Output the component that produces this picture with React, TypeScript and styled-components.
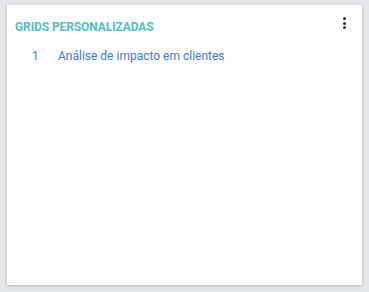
import React from "react";
import styled, { createGlobalStyle } from "styled-components";

const Global = createGlobalStyle`
  html, body { margin: 0; padding: 0; background: #e4e8ea; }
  body { font-family: Roboto, "Noto Sans", sans-serif; }
`;

const Page = styled.div`
  width: 369px;
  height: 292px;
  box-sizing: border-box;
  padding: 5px 7px 7px 7px;
  background: #e4e8ea;
`;

const Card = styled.div`
  position: relative;
  height: 100%;
  background: #fff;
  box-shadow: 0 1px 4px rgba(0, 0, 0, 0.22);
  padding: 14px 8px;
  box-sizing: border-box;
`;

const Title = styled.h2`
  margin: 0;
  font-size: 12px;
  font-weight: 700;
  color: #4fc1c6;
  line-height: 16px;
  letter-spacing: -0.1px;
`;

const List = styled.ol`
  list-style: none;
  margin: 13px 0 0;
  padding: 0;
`;

const Item = styled.li`
  display: flex;
  align-items: center;
  font-size: 12px;
  line-height: 16px;
`;

const Num = styled.span`
  width: 43px;
  box-sizing: border-box;
  padding-left: 17px;
  color: #5b7fa5;
`;

const Link = styled.a`
  color: #3b7cc0;
  text-decoration: none;
`;

const Menu = styled.button`
  position: absolute;
  top: 8px;
  right: 14px;
  border: 0;
  background: none;
  padding: 0;
  width: 8px;
  height: 20px;
  display: flex;
  flex-direction: column;
  align-items: center;
  justify-content: center;
  gap: 1.5px;
`;

const Dot = styled.span`
  width: 3px;
  height: 3px;
  border-radius: 50%;
  background: #2b2b2b;
`;

export default function App() {
  return (
    <>
      <Global />
      <Page>
        <Card>
          <Title>GRIDS PERSONALIZADAS</Title>
          <Menu aria-label="menu">
            <Dot />
            <Dot />
            <Dot />
          </Menu>
          <List>
            <Item>
              <Num>1</Num>
              <Link href="#">Análise de impacto em clientes</Link>
            </Item>
          </List>
        </Card>
      </Page>
    </>
  );
}
